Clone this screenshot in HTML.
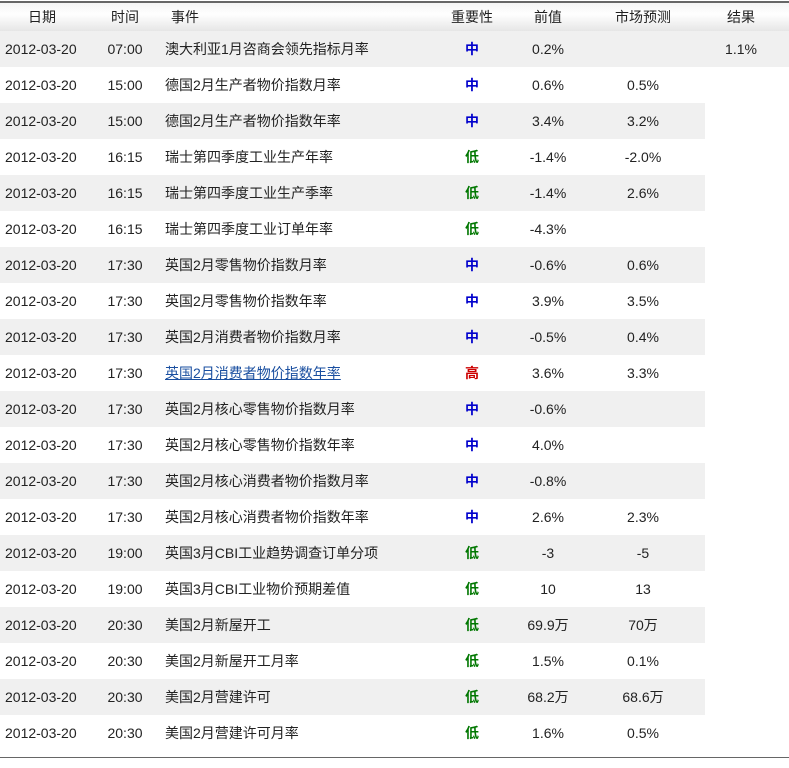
<!DOCTYPE html>
<html><head><meta charset="utf-8"><style>
body{margin:0;width:789px;height:768px;background:#fff;position:relative;overflow:hidden;font-family:"Liberation Sans","Noto Sans CJK SC",sans-serif;font-size:14px;color:#222}
.hd{position:absolute;left:0;top:1px;width:789px;height:28px;border-top:2px solid #666;border-bottom:1px solid #bbb;background:linear-gradient(#f4f4f4,#fff 40%,#e6e6e6)}
.r{position:absolute;left:0;height:36px;width:789px}
.g{background:#f0f0f0;width:705px}
.c{position:absolute;top:0;line-height:36px;white-space:nowrap}
.ct{transform:translateX(-50%)}
.m{color:#0000cc;font-weight:bold}.l{color:#007700;font-weight:bold}.h{color:#cc0000;font-weight:bold}
a{color:#1a4fa0;text-decoration:underline}
.bl{position:absolute;left:0;top:757px;width:789px;height:1px;background:#666}
</style></head><body>
<div class="hd">
<div class="c ct" style="left:42px;line-height:28px">日期</div>
<div class="c ct" style="left:125px;line-height:28px">时间</div>
<div class="c" style="left:171px;line-height:28px">事件</div>
<div class="c ct" style="left:472px;line-height:28px">重要性</div>
<div class="c ct" style="left:548px;line-height:28px">前值</div>
<div class="c ct" style="left:643px;line-height:28px">市场预测</div>
<div class="c ct" style="left:741px;line-height:28px">结果</div>
</div>
<div id="rows"></div>
<div class="bl"></div>
<script>
var d=[["07:00","澳大利亚1月咨商会领先指标月率","m","0.2%","","1.1%"],
["15:00","德国2月生产者物价指数月率","m","0.6%","0.5%"],
["15:00","德国2月生产者物价指数年率","m","3.4%","3.2%"],
["16:15","瑞士第四季度工业生产年率","l","-1.4%","-2.0%"],
["16:15","瑞士第四季度工业生产季率","l","-1.4%","2.6%"],
["16:15","瑞士第四季度工业订单年率","l","-4.3%",""],
["17:30","英国2月零售物价指数月率","m","-0.6%","0.6%"],
["17:30","英国2月零售物价指数年率","m","3.9%","3.5%"],
["17:30","英国2月消费者物价指数月率","m","-0.5%","0.4%"],
["17:30","<a>英国2月消费者物价指数年率</a>","h","3.6%","3.3%"],
["17:30","英国2月核心零售物价指数月率","m","-0.6%",""],
["17:30","英国2月核心零售物价指数年率","m","4.0%",""],
["17:30","英国2月核心消费者物价指数月率","m","-0.8%",""],
["17:30","英国2月核心消费者物价指数年率","m","2.6%","2.3%"],
["19:00","英国3月CBI工业趋势调查订单分项","l","-3","-5"],
["19:00","英国3月CBI工业物价预期差值","l","10","13"],
["20:30","美国2月新屋开工","l","69.9万","70万"],
["20:30","美国2月新屋开工月率","l","1.5%","0.1%"],
["20:30","美国2月营建许可","l","68.2万","68.6万"],
["20:30","美国2月营建许可月率","l","1.6%","0.5%"]];
var lab={m:"中",l:"低",h:"高"},s="";
d.forEach(function(r,i){
var cls="r"+(i%2==0?(i==0?"":" g"):"");
var bg=i==0?"background:#f0f0f0;":"";
s+='<div class="'+cls+'" style="'+bg+'top:'+(31+36*i)+'px">'+
'<div class="c" style="left:5px">2012-03-20</div>'+
'<div class="c ct" style="left:125px">'+r[0]+'</div>'+
'<div class="c" style="left:165px">'+r[1]+'</div>'+
'<div class="c ct '+r[2]+'" style="left:472px">'+lab[r[2]]+'</div>'+
'<div class="c ct" style="left:548px">'+r[3]+'</div>'+
'<div class="c ct" style="left:643px">'+r[4]+'</div>'+
(r[5]?'<div class="c ct" style="left:741px">'+r[5]+'</div>':'')+
'</div>';});
document.getElementById("rows").innerHTML=s;
</script>
</body></html>
